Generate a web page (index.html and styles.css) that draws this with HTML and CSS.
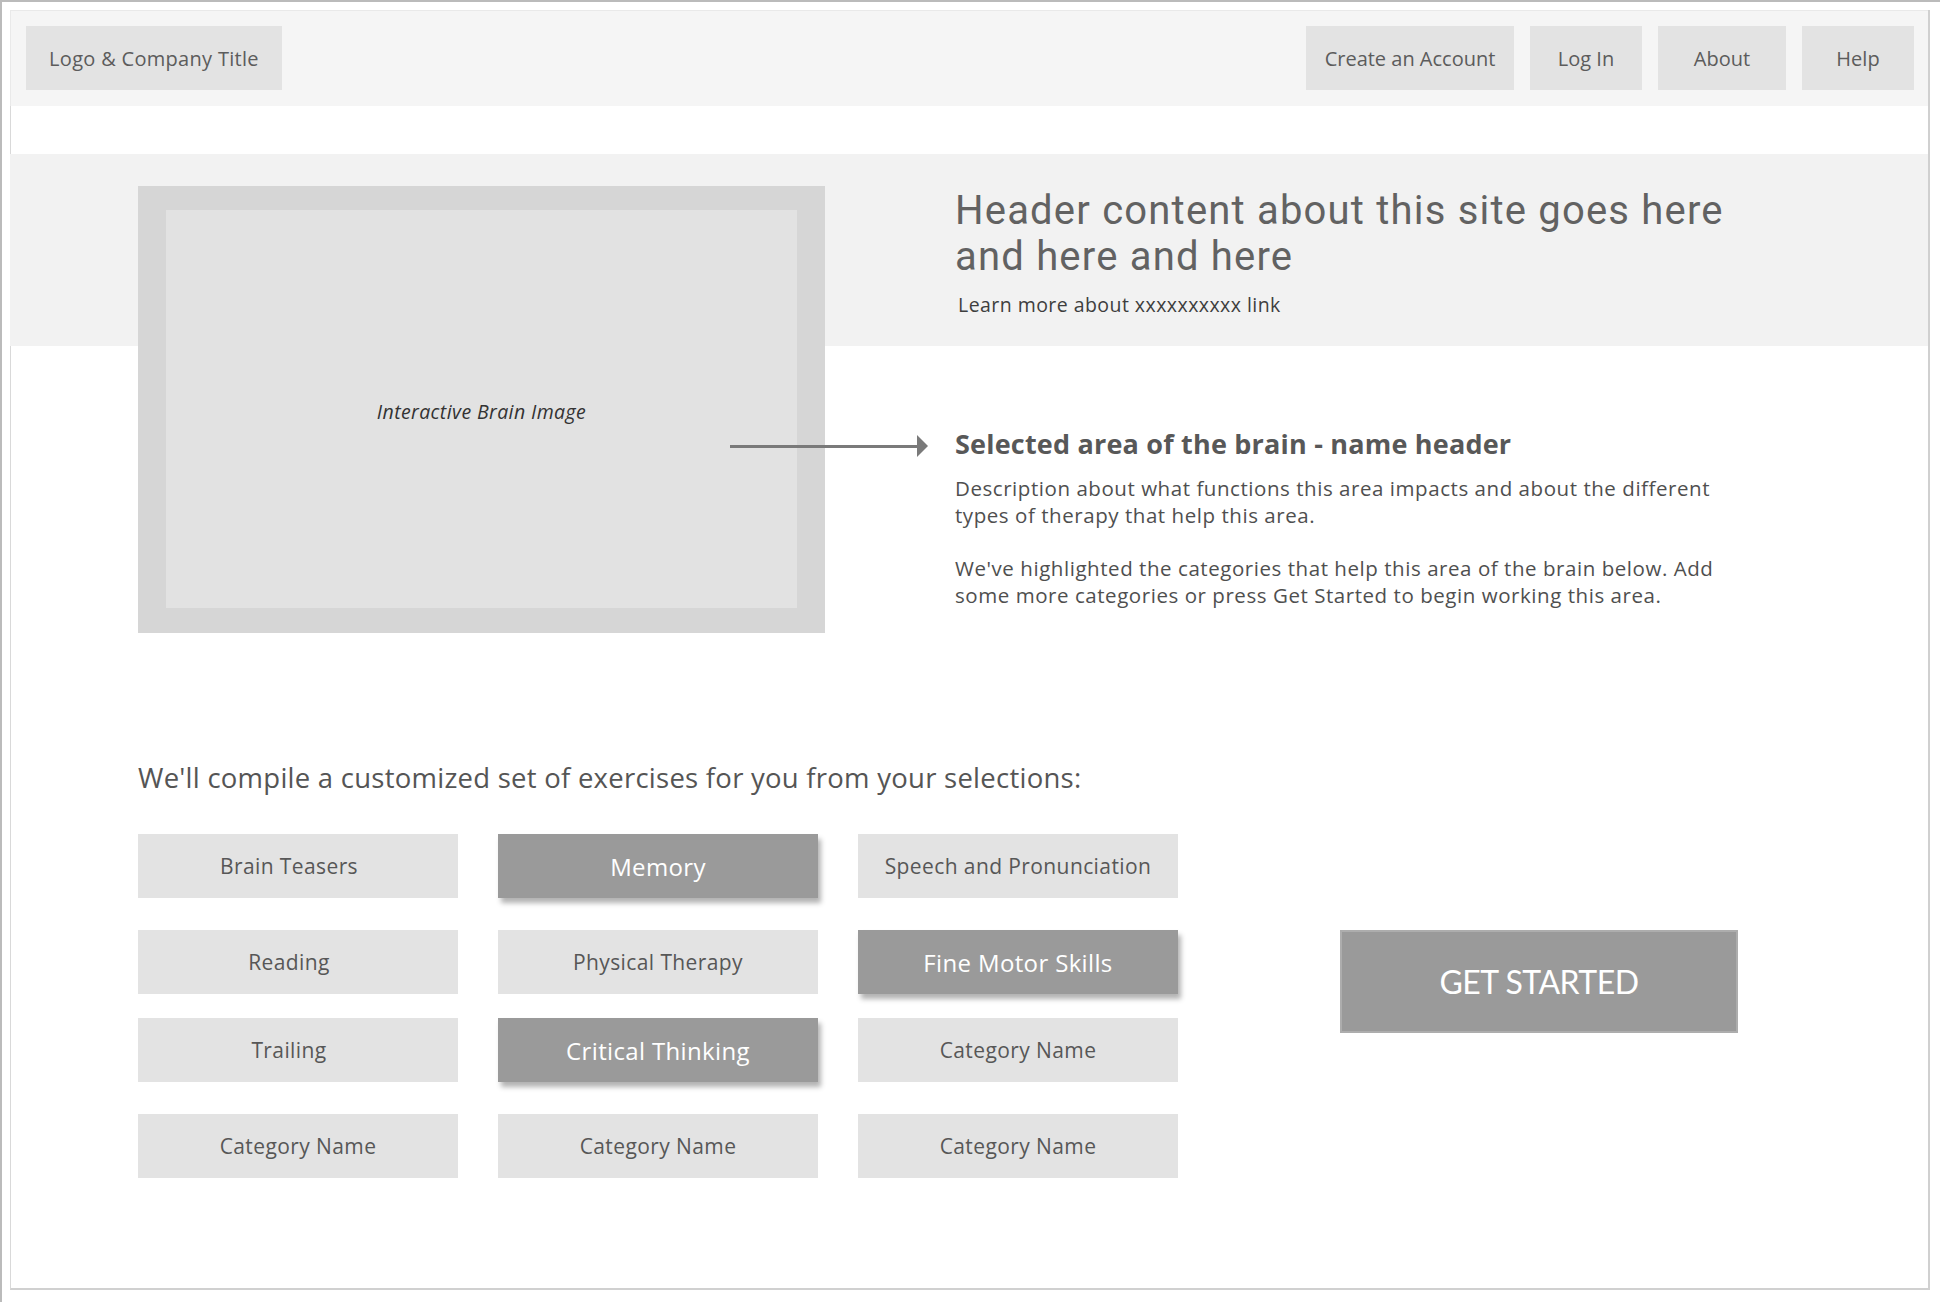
FILE: index.html
```html
<!DOCTYPE html>
<html lang="en">
<head>
<meta charset="utf-8">
<title>Brain Training – Wireframe</title>
<link rel="stylesheet" href="styles.css">
</head>
<body>
<div class="page">
  <header class="topbar">
    <div class="tb-btn logo">Logo &amp; Company Title</div>
    <nav class="nav">
      <a class="tb-btn w-create">Create an Account</a>
      <a class="tb-btn w-login">Log In</a>
      <a class="tb-btn w-about">About</a>
      <a class="tb-btn w-help">Help</a>
    </nav>
  </header>

  <section class="hero">
    <div class="brain">
      <div class="brain-inner"><span class="brain-label">Interactive Brain Image</span></div>
    </div>
    <div class="arrow"></div>
    <div class="hero-text">
      <h1 class="headline">Header content about this site goes here<br>and here and here</h1>
      <p class="learn">Learn more about xxxxxxxxxx link</p>
      <h2 class="area-title">Selected area of the brain - name header</h2>
      <p class="desc">Description about what functions this area impacts and about the different<br>types of therapy that help this area.</p>
      <p class="desc">We've highlighted the categories that help this area of the brain below. Add<br>some more categories or press Get Started to begin working this area.</p>
    </div>
  </section>

  <section class="compile">
    <h3 class="compile-title">We'll compile a customized set of exercises for you from your selections:</h3>
    <div class="compile-body">
      <div class="cats">
        <div class="cat-row">
          <div class="cat nudge">Brain Teasers</div>
          <div class="cat selected">Memory</div>
          <div class="cat">Speech and Pronunciation</div>
        </div>
        <div class="cat-row">
          <div class="cat nudge">Reading</div>
          <div class="cat">Physical Therapy</div>
          <div class="cat selected">Fine Motor Skills</div>
        </div>
        <div class="cat-row tight">
          <div class="cat nudge">Trailing</div>
          <div class="cat selected">Critical Thinking</div>
          <div class="cat">Category Name</div>
        </div>
        <div class="cat-row">
          <div class="cat">Category Name</div>
          <div class="cat">Category Name</div>
          <div class="cat">Category Name</div>
        </div>
      </div>
      <button class="start">GET STARTED</button>
    </div>
  </section>
</div>
</body>
</html>
```

FILE: styles.css
```css
html, body {
  height: 100%;
}
body {
  margin: 0;
  box-sizing: border-box;
  min-height: 100vh;
  border-top: 2px solid #bbbbbb;
  border-left: 2px solid #bbbbbb;
  padding: 8px 10px 12px 8px;
  background: #ffffff;
  font-family: "Open Sans", Lato, sans-serif;
  color: #555555;
}

.page {
  box-sizing: border-box;
  width: 1920px;
  height: 1280px;
  border-left: 1px solid #d9d9d9;
  border-right: 2px solid #d0d0d0;
  border-bottom: 2px solid #d0d0d0;
}

/* ---------- top bar ---------- */
.topbar {
  display: flex;
  justify-content: space-between;
  align-items: center;
  margin-left: -1px;
  padding: 15px 14px 16px 15px;
  background: #f5f5f5;
  border-top: 1px solid #e9e9e9;
  border-left: 1px solid #e9e9e9;
}
.nav {
  display: flex;
  gap: 16px;
}
.tb-btn {
  display: flex;
  align-items: center;
  justify-content: center;
  height: 64px;
  background: #e3e3e3;
  color: #5c5c5c;
  font-size: 20px;
  text-decoration: none;
}
.logo {
  width: 256px;
  letter-spacing: 0.3px;
}
.w-create { width: 208px; }
.w-login { width: 112px; }
.w-about { width: 128px; }
.w-help { width: 112px; }

/* ---------- hero ---------- */
.hero {
  position: relative;
  display: flex;
  align-items: flex-start;
  gap: 130px;
  margin: 48px 0 0 -1px;
  padding: 32px 0 0 128px;
  background: linear-gradient(#f2f2f2 0, #f2f2f2 192px, transparent 192px);
}
.brain {
  box-sizing: border-box;
  width: 687px;
  height: 447px;
  padding: 24px 28px 25px 28px;
  background: #d6d6d6;
  flex: none;
}
.brain-inner {
  height: 100%;
  display: flex;
  align-items: center;
  justify-content: center;
  background: #e2e2e2;
}
.brain-label {
  font-style: italic;
  font-size: 19.5px;
  letter-spacing: 0.4px;
  color: #333333;
  margin-top: 4px;
}
.arrow {
  position: absolute;
  left: 720px;
  top: 291px;
  width: 187px;
  height: 3px;
  background: #7a7a7a;
}
.arrow::after {
  content: "";
  position: absolute;
  left: 187px;
  top: -10px;
  border-left: 11px solid #7a7a7a;
  border-top: 11px solid transparent;
  border-bottom: 11px solid transparent;
}

.hero-text {
  padding-top: 2px;
}
.headline {
  margin: 0;
  font-family: Roboto, "Open Sans", sans-serif;
  font-size: 40px;
  font-weight: 400;
  line-height: 46px;
  letter-spacing: 1.2px;
  color: #626262;
}
.learn {
  margin: 13px 0 0 3px;
  font-size: 19.5px;
  line-height: 24px;
  letter-spacing: 0.45px;
  color: #3e3e3e;
}
.area-title {
  margin: 111px 0 0 0;
  font-size: 27px;
  line-height: 32px;
  font-weight: 700;
  letter-spacing: 0.2px;
  color: #585858;
}
.desc {
  margin: 15px 0 0 0;
  font-size: 20.5px;
  line-height: 27px;
  letter-spacing: 0.55px;
  color: #4f4f4f;
}
.desc + .desc {
  margin-top: 26px;
}

/* ---------- compile ---------- */
.compile {
  margin-top: 128px;
  padding-left: 127px;
}
.compile-title {
  margin: 0;
  font-size: 27.5px;
  line-height: 34px;
  font-weight: 400;
  letter-spacing: 0.25px;
  color: #555555;
}
.compile-body {
  display: flex;
  align-items: flex-start;
  gap: 162px;
  margin-top: 39px;
}
.cats {
  display: flex;
  flex-direction: column;
  gap: 32px;
}
.cat-row {
  display: flex;
  gap: 40px;
}
.cat-row.tight {
  margin-top: -8px;
}
.cat {
  box-sizing: border-box;
  width: 320px;
  height: 64px;
  display: flex;
  align-items: center;
  justify-content: center;
  background: #e3e3e3;
  color: #575757;
  font-size: 21px;
  letter-spacing: 0.4px;
}
.cat.nudge {
  padding-right: 18px;
}
.cat.selected {
  background: #9a9a9a;
  color: #ffffff;
  font-size: 24px;
  letter-spacing: 0.35px;
  box-shadow: 3px 5px 5px rgba(0, 0, 0, 0.3);
}
.start {
  box-sizing: border-box;
  width: 398px;
  height: 103px;
  margin-top: 96px;
  background: #9a9a9a;
  border: 2px solid #adadad;
  color: #ffffff;
  font-family: Lato, "Open Sans", sans-serif;
  font-size: 32px;
  letter-spacing: -0.5px;
  padding: 0;
}
```
